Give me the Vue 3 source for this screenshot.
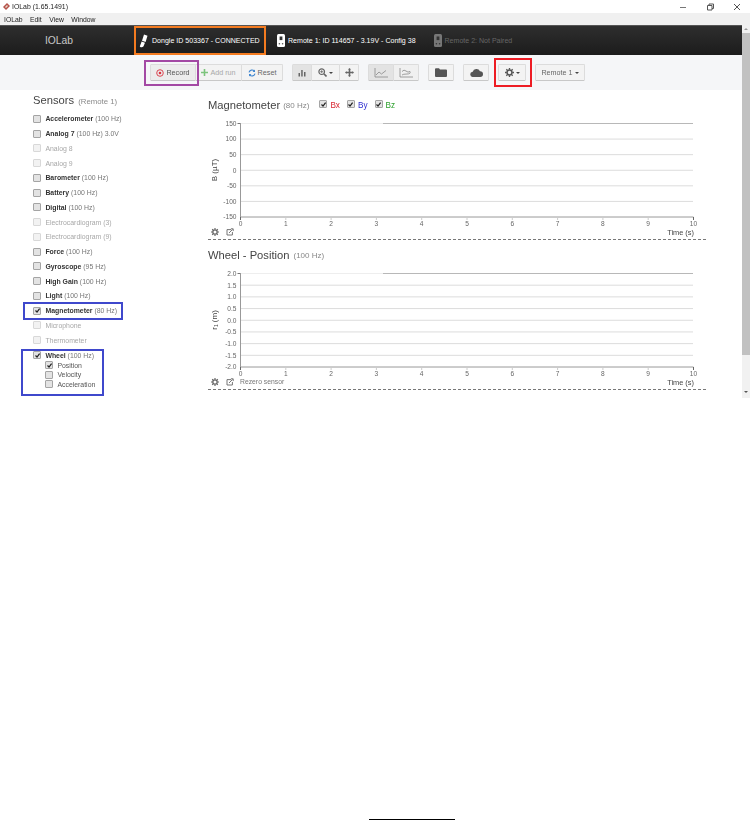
<script setup>
const sensors = [
  { name: 'Accelerometer', rate: '(100 Hz)', on: true },
  { name: 'Analog 7', rate: '(100 Hz) 3.0V', on: true },
  { name: 'Analog 8', off: true },
  { name: 'Analog 9', off: true },
  { name: 'Barometer', rate: '(100 Hz)', on: true },
  { name: 'Battery', rate: '(100 Hz)', on: true },
  { name: 'Digital', rate: '(100 Hz)', on: true },
  { name: 'Electrocardiogram (3)', off: true },
  { name: 'Electrocardiogram (9)', off: true },
  { name: 'Force', rate: '(100 Hz)', on: true },
  { name: 'Gyroscope', rate: '(95 Hz)', on: true },
  { name: 'High Gain', rate: '(100 Hz)', on: true },
  { name: 'Light', rate: '(100 Hz)', on: true },
  { name: 'Magnetometer', rate: '(80 Hz)', on: true, checked: true, boxed: true },
  { name: 'Microphone', off: true },
  { name: 'Thermometer', off: true },
]
const subs = [
  { name: 'Position', checked: true },
  { name: 'Velocity' },
  { name: 'Acceleration' },
]
const X0 = 32.5
const XS = 45.3
const xTicks = [0, 1, 2, 3, 4, 5, 6, 7, 8, 9, 10].map((v) => ({ v, x: X0 + v * XS }))
const makeY = (labels) =>
  labels.map((label, i) => ({ label, y: 9.5 + (i * 93.5) / (labels.length - 1) }))
const charts = [
  {
    title: 'Magnetometer',
    rate: '(80 Hz)',
    big: true,
    axis: 'B (µT)',
    ticks: makeY(['150', '100', '50', '0', '-50', '-100', '-150']),
    channels: [
      { label: 'Bx', color: '#d9232e' },
      { label: 'By', color: '#2f2fd0' },
      { label: 'Bz', color: '#2ca02c' },
    ],
  },
  {
    title: 'Wheel - Position',
    rate: '(100 Hz)',
    axis: 'r₁ (m)',
    ticks: makeY(['2.0', '1.5', '1.0', '0.5', '0.0', '-0.5', '-1.0', '-1.5', '-2.0']),
    channels: [],
    rezero: true,
  },
]
</script>

<template>
  <div class="page">
    <div class="titlebar">
      <svg class="app-icon" width="9" height="9" viewBox="0 0 9 9">
        <path d="M1 5 L5 1 L8 4 L4 8 Z" fill="#b5524a" />
        <path d="M3 5 L5 3 L6 4 L4 6 Z" fill="#e8d8c8" />
      </svg>
      <span>IOLab (1.65.1491)</span>
      <div class="win-controls">
        <svg width="8" height="8" viewBox="0 0 8 8"><path d="M1 4.5H7" stroke="#777" /></svg>
        <svg width="8" height="8" viewBox="0 0 8 8" fill="none" stroke="#555"><path d="M1.5 2.5h4.5v4.5h-4.5zM3 2.5V1h4.5v4.5H6" /></svg>
        <svg width="8" height="8" viewBox="0 0 8 8" stroke="#555"><path d="M1 1L7 7M7 1L1 7" /></svg>
      </div>
    </div>
    <div class="menubar">
      <span>IOLab</span><span>Edit</span><span>View</span><span>Window</span>
    </div>

    <div class="frame">
      <div class="content">
        <header class="header">
          <div class="brand">IOLab</div>
          <div class="status status-dongle mark mark-orange">
            <svg width="9" height="14" viewBox="0 0 9 14"><path d="M5 0.5 L8.5 1.8 L6.6 8 L3 6.8 Z M2.6 7.6 L6 8.8 L4.4 12.6 Q2.5 14 0.8 12.4 Z" fill="#fff" /></svg>
            <span>Dongle ID 503367 - CONNECTED</span>
          </div>
          <div class="status status-r1">
            <svg width="8" height="13" viewBox="0 0 8 13"><rect width="8" height="13" rx="1.5" fill="#fff" /><rect x="2.6" y="2.5" width="2.8" height="3.6" fill="#333" /><circle cx="2.4" cy="9.8" r=".8" fill="#555" /><circle cx="5.6" cy="9.8" r=".8" fill="#555" /></svg>
            <span>Remote 1: ID 114657 - 3.19V - Config 38</span>
          </div>
          <div class="status status-r2">
            <svg width="8" height="13" viewBox="0 0 8 13"><rect width="8" height="13" rx="1.5" fill="#777" /><rect x="2.6" y="2.5" width="2.8" height="3.6" fill="#333" /><circle cx="2.4" cy="9.8" r=".8" fill="#333" /><circle cx="5.6" cy="9.8" r=".8" fill="#333" /></svg>
            <span>Remote 2: Not Paired</span>
          </div>
        </header>

        <div class="toolbar">
          <div class="group group-run">
            <button class="btn btn-record mark mark-purple">
              <svg width="8" height="8" viewBox="0 0 8 8"><circle cx="4" cy="4" r="3.3" fill="none" stroke="#d9333f" stroke-width=".9" /><circle cx="4" cy="4" r="1.3" fill="#d9333f" /></svg>
              Record
            </button>
            <button class="btn btn-add">
              <svg width="7" height="7" viewBox="0 0 7 7"><path d="M3.5 0V7M0 3.5H7" stroke="#7cc47c" stroke-width="1.6" /></svg>
              Add run
            </button>
            <button class="btn btn-reset">
              <svg width="8" height="8" viewBox="0 0 8 8" fill="none" stroke="#3f86d0" stroke-width="1.1"><path d="M1 3.4A3 3 0 0 1 6.3 2.2M7 4.6A3 3 0 0 1 1.7 5.8" /><path d="M7 .6V3H4.6Z M1 7.4V5H3.4Z" fill="#3f86d0" stroke="none" /></svg>
              Reset
            </button>
          </div>
          <div class="group group-view">
            <button class="btn btn-v1 active">
              <svg width="8" height="8" viewBox="0 0 8 8" fill="#666"><path d="M.5 4h1.5v3.5H.5zM3.2 1h1.5v6.5H3.2zM6 3h1.5v4.5H6z" /></svg>
            </button>
            <button class="btn btn-v2">
              <svg width="9" height="9" viewBox="0 0 9 9" fill="none" stroke="#666" stroke-width="1.2"><circle cx="3.7" cy="3.7" r="2.8" /><path d="M5.8 5.8L8.5 8.5" stroke-width="1.6" /><path d="M2.2 3.7h3M3.7 2.2v3" stroke-width=".8" /></svg>
              <i class="caret"></i>
            </button>
            <button class="btn btn-v3">
              <svg width="9" height="9" viewBox="0 0 9 9" fill="#666"><path d="M3.7 1.6H2.9L4.5 0l1.6 1.6H5.3v2.1h2.1V2.9L9 4.5 7.4 6.1V5.3H5.3v2.1h.8L4.5 9 2.9 7.4h.8V5.3H1.6v.8L0 4.5l1.6-1.6v.8h2.1z" /></svg>
            </button>
          </div>
          <div class="group group-line">
            <button class="btn btn-l1 active">
              <svg width="14" height="10" viewBox="0 0 14 10" fill="none" stroke="#888" stroke-width=".8"><path d="M1 0V9H14" /><path d="M2 7L5 4L7.5 6L12 2.5" /></svg>
            </button>
            <button class="btn btn-l2">
              <svg width="14" height="10" viewBox="0 0 14 10" fill="none" stroke="#888" stroke-width=".8"><path d="M1 0V9H14" /><path d="M3 3.5Q5 1 7 3T11 3.5Q12 6 8 6T3 7" /></svg>
            </button>
          </div>
          <button class="btn btn-solo btn-folder">
            <svg width="12" height="9" viewBox="0 0 12 9" fill="#555"><path d="M0 1.2Q0 .3 1 .3H4L5 1.5H11Q12 1.5 12 2.5V8Q12 9 11 9H1Q0 9 0 8Z" /></svg>
          </button>
          <button class="btn btn-solo btn-cloud">
            <svg width="13" height="9" viewBox="0 0 13 9" fill="#555"><path d="M3 9A2.6 2.6 0 0 1 2.7 3.8A3.9 3.9 0 0 1 10 3.2A2.9 2.9 0 0 1 10.2 9Z" /></svg>
          </button>
          <button class="btn btn-solo btn-gear mark mark-red">
            <svg class="gear" width="9" height="9" viewBox="0 0 10 10"><circle cx="5" cy="5" r="2.7" fill="none" stroke="#555" stroke-width="1.6" /><path d="M5 0V2M5 8V10M0 5H2M8 5H10M1.5 1.5L2.9 2.9M7.1 7.1L8.5 8.5M8.5 1.5L7.1 2.9M2.9 7.1L1.5 8.5" stroke="#555" stroke-width="1.5" /></svg>
            <i class="caret"></i>
          </button>
          <button class="btn btn-solo btn-remote">Remote 1 <i class="caret"></i></button>
        </div>

        <div class="main">
          <aside class="sidebar">
            <h2 class="side-title">Sensors <small>(Remote 1)</small></h2>
            <div
              v-for="s in sensors"
              :key="s.name"
              class="row"
              :class="{ disabled: s.off, 'mark-blue-a': s.boxed }"
            >
              <span class="cb" :class="{ 'cb-off': s.off }">
                <svg v-if="s.checked" width="7" height="7" viewBox="0 0 7 7"><path d="M1.5 3.5L3 5L5.6 1.6" fill="none" stroke="#222" stroke-width="1.2" /></svg>
              </span>
              <span class="label"><b v-if="s.on">{{ s.name }}</b><template v-else>{{ s.name }}</template> <span v-if="s.rate" class="rate">{{ s.rate }}</span></span>
            </div>
            <div class="wheel mark-blue-b">
              <div class="row">
                <span class="cb"><svg width="7" height="7" viewBox="0 0 7 7"><path d="M1.5 3.5L3 5L5.6 1.6" fill="none" stroke="#222" stroke-width="1.2" /></svg></span>
                <span class="label"><b>Wheel</b> <span class="rate">(100 Hz)</span></span>
              </div>
              <div v-for="sub in subs" :key="sub.name" class="subrow">
                <span class="cb">
                  <svg v-if="sub.checked" width="7" height="7" viewBox="0 0 7 7"><path d="M1.5 3.5L3 5L5.6 1.6" fill="none" stroke="#222" stroke-width="1.2" /></svg>
                </span>
                <span class="label">{{ sub.name }}</span>
              </div>
            </div>
          </aside>

          <section class="charts">
            <article v-for="c in charts" :key="c.title" class="chart">
              <div class="chart-head">
                <span class="chart-title">{{ c.title }}</span>
                <span class="chart-rate" :class="{ 'chart-rate-big': c.big }">{{ c.rate }}</span>
                <span v-for="ch in c.channels" :key="ch.label" class="channel" :style="{ color: ch.color }">
                  <span class="cb">
                    <svg width="7" height="7" viewBox="0 0 7 7"><path d="M1.5 3.5L3 5L5.6 1.6" fill="none" stroke="#222" stroke-width="1.2" /></svg>
                  </span>
                  {{ ch.label }}
                </span>
              </div>
              <svg class="plot" width="498" height="112" viewBox="0 0 498 112">
                <line
                  v-for="(t, i) in c.ticks"
                  :key="'g' + t.label"
                  :x1="X0" :x2="485" :y1="t.y" :y2="t.y"
                  :stroke="i === 0 ? '#b8b8b8' : '#dcdcdc'"
                />
                <line :x1="X0" x2="175" :y1="c.ticks[0].y" :y2="c.ticks[0].y" stroke="#eeeeee" />
                <line :x1="X0 - 3" :x2="X0" :y1="c.ticks[0].y" :y2="c.ticks[0].y" stroke="#777" />
                <text
                  v-for="t in c.ticks"
                  :key="'l' + t.label"
                  :x="X0 - 4" :y="t.y + 2.4"
                  text-anchor="end"
                  class="tick"
                >{{ t.label }}</text>
                <line :x1="X0" :x2="X0" y1="9" y2="103.5" stroke="#999" />
                <line :x1="X0" x2="485.5" y1="103" y2="103" stroke="#aaa" />
                <template v-for="t in xTicks" :key="t.v">
                  <line :x1="t.x" :x2="t.x" y1="103" y2="106" :stroke="t.v === 0 || t.v === 10 ? '#666' : '#ccc'" />
                  <text :x="t.x" y="112" text-anchor="middle" class="tick">{{ t.v }}</text>
                </template>
                <text x="0" y="0" class="axis-title" text-anchor="middle" transform="translate(8.5 56) rotate(-90)">{{ c.axis }}</text>
              </svg>
              <div class="chart-foot">
                <svg class="gear" width="8" height="8" viewBox="0 0 10 10"><circle cx="5" cy="5" r="2.7" fill="none" stroke="#666" stroke-width="1.6" /><path d="M5 0V2M5 8V10M0 5H2M8 5H10M1.5 1.5L2.9 2.9M7.1 7.1L8.5 8.5M8.5 1.5L7.1 2.9M2.9 7.1L1.5 8.5" stroke="#666" stroke-width="1.5" /></svg>
                <svg class="popout" width="8" height="8" viewBox="0 0 8 8" fill="none" stroke="#666" stroke-width=".9"><path d="M5 1.6H1V7H6.4V4" /><path d="M3 5L6.5 1.5M4.9 .8H7.2V3.1" /></svg>
                <span v-if="c.rezero" class="rezero">Rezero sensor</span>
                <span class="time">Time (s)</span>
              </div>
            </article>
          </section>
        </div>
      </div>

      <div class="scrollbar">
        <span class="arrow arrow-up"></span>
        <span class="thumb"></span>
        <span class="arrow arrow-down"></span>
      </div>
    </div>

    <div class="footer-rule"></div>
  </div>
</template>

<style>
html, body { margin: 0; background: #fff; }
</style>

<style scoped>
.page {
  width: 750px;
  height: 820px;
  display: flex;
  flex-direction: column;
  overflow: hidden;
  background: #fff;
  font-family: "Liberation Sans", Arial, sans-serif;
  color: #333;
}
.titlebar,
.menubar,
.content,
.scrollbar { filter: blur(0.3px); }
.titlebar {
  height: 13px;
  display: flex;
  align-items: center;
  gap: 1px;
  padding: 0 9px 0 2px;
  font-size: 6.9px;
  color: #222;
}
.win-controls {
  margin-left: auto;
  display: flex;
  gap: 19px;
}
.menubar {
  height: 12px;
  background: #f0f0f0;
  display: flex;
  align-items: center;
  gap: 7.5px;
  padding-left: 4px;
  font-size: 6.8px;
  color: #222;
}
.frame {
  height: 373px;
  display: flex;
}
.content {
  width: 742px;
  overflow: hidden;
}
.scrollbar {
  width: 8px;
  background: #f1f1f1;
  display: flex;
  flex-direction: column;
  align-items: center;
}
.thumb {
  width: 8px;
  height: 322px;
  margin-top: 3px;
  background: #c1c1c1;
}
.arrow {
  width: 0;
  height: 0;
  border-left: 2.5px solid transparent;
  border-right: 2.5px solid transparent;
}
.arrow-up { margin-top: 3px; border-bottom: 2.5px solid #999; }
.arrow-down { margin-top: 36px; border-top: 2.5px solid #555; }

.mark { position: relative; }
.mark::after {
  content: "";
  position: absolute;
  box-sizing: border-box;
  pointer-events: none;
}
.mark-orange::after { left: -5.5px; width: 132px; top: -0.5px; height: 29px; border: 2.5px solid #f47b20; }
.mark-purple::after { left: -7px; right: -3.5px; top: -5px; bottom: -6px; border: 2.5px solid #a349a4; }
.mark-red::after { left: -5px; right: -6.5px; top: -7px; bottom: -7px; border: 2.5px solid #ed1c24; }

.header {
  height: 30px;
  box-sizing: border-box;
  display: flex;
  align-items: center;
  background: linear-gradient(#2e2e2e, #1c1c1c);
  border-top: 1px solid #555;
  color: #fff;
  font-size: 7.05px;
}
.brand {
  width: 139px;
  box-sizing: border-box;
  padding-left: 45px;
  font-size: 10.3px;
  color: #c8c8c8;
}
.status {
  display: flex;
  align-items: center;
  height: 29px;
  white-space: nowrap;
}
.status-dongle { width: 138px; gap: 4px; }
.status-r1 { width: 157px; gap: 3px; }
.status-r2 { gap: 2.5px; color: #666; }

.toolbar {
  height: 35px;
  box-sizing: border-box;
  padding-top: 9px;
  background: #f5f6f8;
  display: flex;
  align-items: flex-start;
}
.btn {
  height: 17px;
  box-sizing: border-box;
  padding: 0;
  display: inline-flex;
  align-items: center;
  justify-content: center;
  gap: 2px;
  background: #f3f3f3;
  border: 1px solid #dcdcdc;
  border-bottom-color: #c8c8c8;
  border-radius: 1.5px;
  font: 7.2px "Liberation Sans", Arial, sans-serif;
  color: #666;
}
.btn.active { background: #e3e3e3; }
.group { display: flex; }
.group .btn + .btn { margin-left: -1px; }
.group-run { margin-left: 150px; }
.btn-record { width: 46px; background: #ececec; color: #555; }
.btn-add { width: 47px; color: #a8a8a8; }
.btn-reset { width: 42px; }
.group-view { margin-left: 9px; }
.btn-v1 { width: 20px; }
.btn-v2 { width: 29px; }
.btn-v3 { width: 20px; }
.group-line { margin-left: 9px; }
.btn-l1 { width: 26px; }
.btn-l2 { width: 26px; background: #f0f0f0; }
.btn-solo { margin-left: 9px; }
.btn-folder { width: 26px; }
.btn-cloud { width: 26px; }
.btn-gear { width: 28px; margin-left: 9px; }
.btn-remote { width: 50px; margin-left: 9px; }
.caret {
  width: 0;
  height: 0;
  border-left: 2.2px solid transparent;
  border-right: 2.2px solid transparent;
  border-top: 2.2px solid #444;
}

.main { display: flex; }
.sidebar {
  width: 208px;
  flex: none;
  box-sizing: border-box;
  padding-left: 33px;
}
.side-title {
  margin: 4px 0 0;
  height: 17.5px;
  font-size: 11.2px;
  font-weight: 400;
  color: #444;
}
.side-title small { font-size: 7.8px; color: #8a8a8a; margin-left: 1px; }
.row {
  height: 14.75px;
  display: flex;
  align-items: center;
  font-size: 6.9px;
  position: relative;
  white-space: nowrap;
}
.label b { color: #333; }
.rate { color: #777; }
.row.disabled .label { color: #a8a8a8; }
.cb {
  width: 6px;
  height: 6px;
  flex: none;
  margin-right: 4.4px;
  display: inline-flex;
  align-items: center;
  justify-content: center;
  background: #e3e3e3;
  border: .5px solid #a4a4a4;
  border-radius: 1px;
}
.cb-off { background: #f2f2f2; border-color: #d8d8d8; }
.cb svg { flex: none; }
.mark-blue-a::after,
.mark-blue-b::after {
  content: "";
  position: absolute;
  box-sizing: border-box;
  pointer-events: none;
  border: 2.5px solid #3f48cc;
}
.mark-blue-a::after { left: -10px; top: -1.5px; width: 100px; height: 18px; }
.wheel { position: relative; }
.mark-blue-b::after { left: -12px; top: -1px; width: 83px; height: 47px; }
.subrow {
  height: 9.6px;
  margin-left: 12px;
  display: flex;
  align-items: center;
  font-size: 6.9px;
  color: #555;
}
.wheel .row { height: 11px; margin-top: 2px; }

.charts { width: 498px; padding-top: 8px; }
.chart { height: 150px; }
.chart-head {
  height: 16px;
  padding-bottom: 2px;
  box-sizing: border-box;
  display: flex;
  align-items: center;
  white-space: nowrap;
}
.chart-title { font-size: 11.2px; color: #444; }
.chart-rate { font-size: 8px; color: #888; margin-left: 4px; margin-top: 1px; }
.chart-rate-big { margin-left: 3px; margin-right: 3px; }
.channel {
  display: inline-flex;
  align-items: center;
  font-size: 8.2px;
  margin-left: 7px;
}
.channel .cb { margin-right: 3px; margin-top: -2px; }
.plot { display: block; }
.tick { font: 6.6px "Liberation Sans", Arial, sans-serif; fill: #666; }
.axis-title { font: 8px "Liberation Sans", Arial, sans-serif; fill: #444; }
.chart-foot {
  height: 14px;
  position: relative;
  display: flex;
  align-items: center;
  box-sizing: border-box;
  padding: 0 12px 2px 3px;
  border-bottom: 1px dashed #777;
  font-size: 6.8px;
}
.popout { margin-left: 7px; }
.rezero { margin-left: 6px; color: #777; }
.time { margin-left: auto; color: #444; font-size: 7.4px; position: relative; top: 1px; }

.footer-rule {
  width: 86px;
  height: 1px;
  margin: auto 0 0 369px;
  position: relative;
  top: -0.5px;
  background: #000;
}
</style>
